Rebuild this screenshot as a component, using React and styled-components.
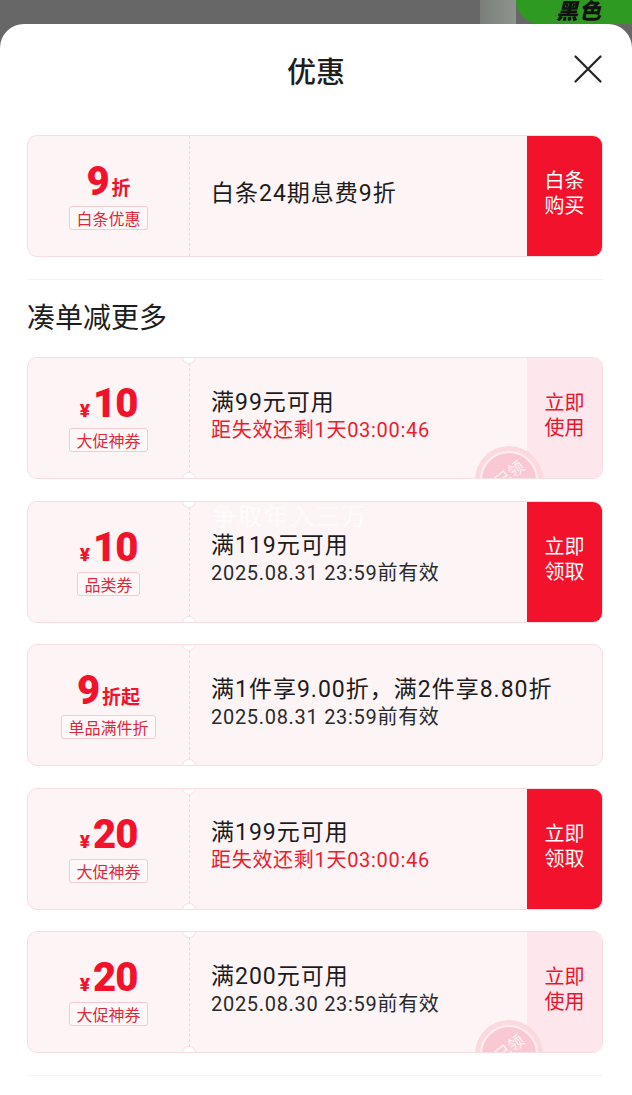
import styled, { createGlobalStyle } from "styled-components";

const RED = "#f2122b";

const GlobalStyle = createGlobalStyle`
  html, body {
    margin: 0;
    padding: 0;
    background: #676767;
    font-family: "Roboto", "Noto Sans CJK SC", sans-serif;
  }
`;

const coupons = [
  {
    amount: "10",
    tag: "大促神券",
    title: "满99元可用",
    sub: "距失效还剩1天03:00:46",
    subRed: true,
    action: "立即\n使用",
    filled: false,
    stamp: true,
  },
  {
    amount: "10",
    tag: "品类券",
    title: "满119元可用",
    sub: "2025.08.31 23:59前有效",
    action: "立即\n领取",
    filled: true,
  },
  {
    discount: "9",
    unit: "折起",
    tag: "单品满件折",
    title: "满1件享9.00折，满2件享8.80折",
    sub: "2025.08.31 23:59前有效",
  },
  {
    amount: "20",
    tag: "大促神券",
    title: "满199元可用",
    sub: "距失效还剩1天03:00:46",
    subRed: true,
    action: "立即\n领取",
    filled: true,
  },
  {
    amount: "20",
    tag: "大促神券",
    title: "满200元可用",
    sub: "2025.08.30 23:59前有效",
    action: "立即\n使用",
    filled: false,
    stamp: true,
  },
];

const Amount = ({ c }) =>
  c.discount ? (
    <Value>
      <Big>{c.discount}</Big>
      <Unit>{c.unit}</Unit>
    </Value>
  ) : (
    <Value>
      <Yen>¥</Yen>
      <Big>{c.amount}</Big>
    </Value>
  );

const Coupon = ({ c }) => (
  <Card>
    <Left $notched>
      <Amount c={c} />
      <Tag>{c.tag}</Tag>
    </Left>
    <Middle>
      <Title>{c.title}</Title>
      <Sub $red={c.subRed}>{c.sub}</Sub>
    </Middle>
    {c.action && <Action $filled={c.filled}>{c.action}</Action>}
    {c.stamp && (
      <Stamp>
        <StampRing>
          <StampText>已领</StampText>
        </StampRing>
      </Stamp>
    )}
  </Card>
);

const App = () => {
  return (
    <Page>
      <GlobalStyle />
      <Backdrop>
        <Strip />
        <Promo>黑色</Promo>
      </Backdrop>
      <Sheet>
        <Header>
          <HeaderTitle>优惠</HeaderTitle>
          <Close aria-label="关闭">
            <svg width="30" height="30" viewBox="0 0 30 30">
              <path
                d="M2.5 2.5 L27.5 27.5 M27.5 2.5 L2.5 27.5"
                stroke="#222"
                strokeWidth="2.2"
                strokeLinecap="round"
              />
            </svg>
          </Close>
        </Header>

        <Card>
          <Left>
            <Value>
              <Big>9</Big>
              <Unit>折</Unit>
            </Value>
            <Tag>白条优惠</Tag>
          </Left>
          <Middle>
            <Title>白条24期息费9折</Title>
          </Middle>
          <Action $filled>{"白条\n购买"}</Action>
        </Card>

        <Divider />
        <Section>凑单减更多</Section>

        <List>
          {coupons.map((c, i) => (
            <Coupon key={i} c={c} />
          ))}
        </List>
        <Divider />
      </Sheet>
      <Watermark>争取年入三万</Watermark>
    </Page>
  );
};

export default App;

const Page = styled.div`
  position: relative;
  width: 632px;
  height: 1095px;
  overflow: hidden;
  background: #676767;
`;

const Backdrop = styled.div`
  position: relative;
  height: 24px;
  display: flex;
  justify-content: flex-end;
`;

const Strip = styled.div`
  width: 36px;
  height: 100%;
  background: linear-gradient(90deg, #7a7f7a, #8d938d);
`;

const Promo = styled.div`
  width: 116px;
  height: 100%;
  background: #2f9a22;
  border-bottom-left-radius: 40px;
  color: #111;
  font-family: "Noto Sans CJK SC", sans-serif;
  font-weight: 900;
  font-style: italic;
  font-size: 22px;
  line-height: 18px;
  padding-left: 40px;
  box-sizing: border-box;
  letter-spacing: 1px;
`;

const Sheet = styled.div`
  background: #fff;
  border-radius: 24px 24px 0 0;
  padding: 0 29px 0 27px;
  height: 1071px;
`;

const Header = styled.div`
  position: relative;
  height: 92px;
  display: flex;
  align-items: center;
  justify-content: center;
  margin-bottom: 19px;
`;

const HeaderTitle = styled.div`
  font-size: 29px;
  color: #1d1d1d;
  font-weight: 500;
  margin-left: 2px;
`;

const Close = styled.button`
  position: absolute;
  right: 0;
  top: 30px;
  width: 30px;
  height: 30px;
  padding: 0;
  border: none;
  background: none;
  display: flex;
`;

const Card = styled.div`
  position: relative;
  height: 122px;
  box-sizing: border-box;
  display: grid;
  grid-template-columns: 161px 1fr auto;
  background: #fdf4f6;
  border: 1px solid #f6dde2;
  border-radius: 10px;
  overflow: hidden;
`;

const Left = styled.div`
  position: relative;
  display: flex;
  flex-direction: column;
  align-items: center;
  justify-content: center;

  ${({ $notched }) =>
    $notched &&
    `
    &::before, &::after {
      content: "";
      position: absolute;
      right: -7px;
      width: 12px;
      height: 12px;
      border-radius: 50%;
      background: #fff;
      border: 1px solid #f6dde2;
    }
    &::before { top: -8px; }
    &::after { bottom: -8px; }
  `}
`;

const Value = styled.div`
  display: flex;
  align-items: baseline;
  color: ${RED};
  font-family: "Roboto", "Noto Sans CJK SC", sans-serif;
  font-weight: 900;
  line-height: 1;
  height: 40px;
  margin-bottom: 4px;
`;

const Big = styled.span`
  font-size: 40px;
  letter-spacing: -1px;
`;

const Yen = styled.span`
  font-size: 19px;
  margin-right: 3px;
`;

const Unit = styled.span`
  font-family: "Noto Sans CJK SC", sans-serif;
  font-size: 19px;
  font-weight: 700;
  margin-left: 3px;
`;

const Tag = styled.div`
  font-family: "Noto Sans CJK SC", sans-serif;
  font-size: 16px;
  line-height: 22px;
  padding: 0 6px;
  color: #e0283a;
  border: 1px solid #f4cbd1;
  border-radius: 3px;
  background: #fff8f9;
`;

const Middle = styled.div`
  border-left: 1px dashed #f0d6da;
  display: flex;
  flex-direction: column;
  justify-content: center;
  padding-left: 21px;
  padding-bottom: 4px;
`;

const Title = styled.div`
  font-size: 23px;
  letter-spacing: 1px;
  color: #1c1c1c;
  line-height: 28px;
`;

const Sub = styled.div`
  font-size: 20px;
  letter-spacing: 0.7px;
  line-height: 27px;
  color: ${({ $red }) => ($red ? "#ec1c2e" : "#2a2a2a")};
`;

const Action = styled.div`
  width: 75px;
  white-space: pre-line;
  display: flex;
  align-items: center;
  justify-content: center;
  text-align: center;
  font-size: 20px;
  line-height: 25px;
  padding-bottom: 4px;
  box-sizing: border-box;
  background: ${({ $filled }) => ($filled ? RED : "#fde7ed")};
  color: ${({ $filled }) => ($filled ? "#fff" : "#e8162d")};
`;

const Stamp = styled.div`
  position: absolute;
  left: 447px;
  top: 88px;
  width: 68px;
  height: 68px;
  border-radius: 50%;
  background: #fbd9df;
  display: flex;
  align-items: center;
  justify-content: center;
`;

const StampRing = styled.div`
  width: 58px;
  height: 58px;
  border-radius: 50%;
  border: 2px solid #fdeef1;
  background: #f9c8d2;
  display: flex;
  justify-content: center;
  padding-top: 10px;
  box-sizing: border-box;
`;

const StampText = styled.div`
  font-family: "Noto Sans CJK SC", sans-serif;
  color: #fff3f5;
  font-size: 16px;
  transform: rotate(-38deg);
  height: 20px;
  line-height: 20px;
`;

const Divider = styled.div`
  height: 1px;
  background: #f3f3f3;
  margin-top: 22px;
`;

const Section = styled.div`
  font-size: 28px;
  line-height: 30px;
  color: #1d1d1d;
  margin: 24px 0 23px 0;
`;

const List = styled.div`
  display: flex;
  flex-direction: column;
  gap: 21.5px;
`;

const Watermark = styled.div`
  position: absolute;
  left: 212px;
  top: 497px;
  font-family: "Noto Sans CJK SC", sans-serif;
  font-size: 24px;
  letter-spacing: 2px;
  color: rgba(255, 255, 255, 0.7);
  pointer-events: none;
`;
